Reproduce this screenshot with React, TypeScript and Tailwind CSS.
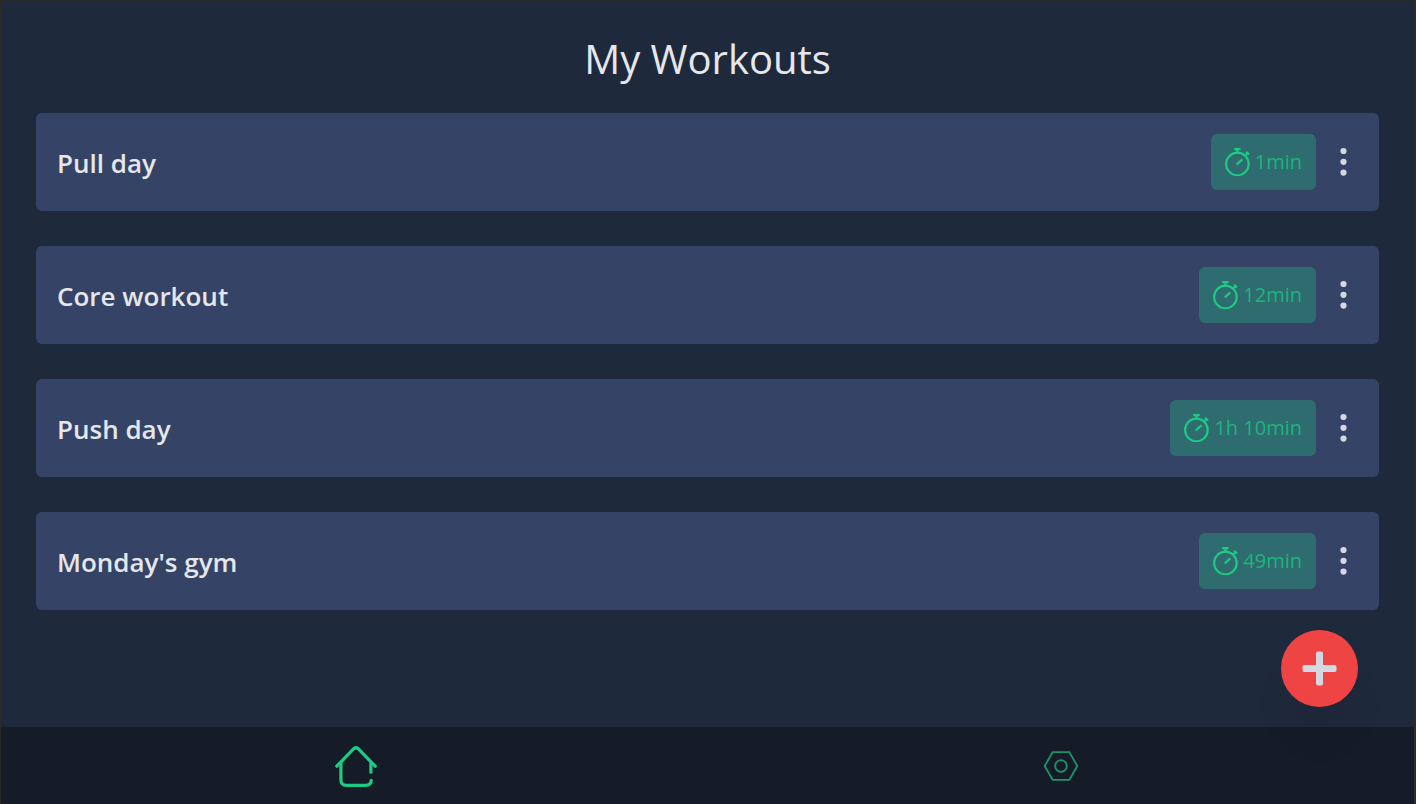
type Workout = { name: string; duration: string };

const workouts: Workout[] = [
  { name: 'Pull day', duration: '1min' },
  { name: 'Core workout', duration: '12min' },
  { name: 'Push day', duration: '1h 10min' },
  { name: "Monday's gym", duration: '49min' },
];

function StopwatchIcon() {
  return (
    <svg aria-hidden="true" className="h-7 w-7 shrink-0 text-[#1dcb84]" viewBox="0 0 28 28" fill="none" stroke="currentColor" strokeWidth="2.1">
      <circle cx="12.4" cy="15.9" r="11.3" />
      <path d="M9.2 1.1h6.4M12.4 1v3.6M20 7.8l3-3M21.2 3.8l2.8 2.8M11.8 16.4l5.6-5" />
    </svg>
  );
}

function DotsIcon() {
  return (
    <svg aria-hidden="true" className="h-8 w-7" viewBox="0 0 28 32" fill="currentColor">
      <circle cx="13.5" cy="5" r="3.1" />
      <circle cx="13.5" cy="15.8" r="3.1" />
      <circle cx="13.5" cy="26.6" r="3.1" />
    </svg>
  );
}

function HomeIcon() {
  return (
    <svg aria-hidden="true" className="h-11 w-11" viewBox="0 0 44 44" fill="none" stroke="currentColor" strokeWidth="3.2" strokeLinecap="round" strokeLinejoin="round">
      <path d="M2.8 22.2L19.8 4.7Q22 2.8 24.2 4.7L41.2 22.2" />
      <path d="M6.9 19V35.8Q6.9 41.3 12.4 41.3H31.8Q37 41.3 37.2 36.4M36.9 19V28.2" />
    </svg>
  );
}

function SettingsIcon() {
  return (
    <svg aria-hidden="true" className="h-9 w-9" viewBox="0 0 36 36" fill="none" stroke="currentColor" strokeWidth="1.8" strokeLinejoin="round">
      <path d="M1.7 18L9.6 4.2H26.4L34.3 18L26.4 31.8H9.6Z" />
      <circle cx="18" cy="18" r="5.8" />
    </svg>
  );
}

function WorkoutCard({ name, duration }: Workout) {
  return (
    <li className="flex items-center justify-between rounded-md bg-[#354466] p-[21px]">
      <h2 className="pt-0.5 text-[26px] leading-9 font-semibold">{name}</h2>
      <div className="flex items-center gap-[14px]">
        <span className="flex h-14 items-center gap-0.5 rounded-md bg-[#2f6c70] px-[14px] text-xl text-[#1cb57d]">
          <StopwatchIcon />
          {duration}
        </span>
        <button type="button" aria-label={`Options for ${name}`} className="text-[#d5d8e3]">
          <DotsIcon />
        </button>
      </div>
    </li>
  );
}

export default function App() {
  return (
    <div className="flex min-h-screen flex-col border border-r-2 border-b-0 border-[#2a2a2a] bg-[#1f293c] font-['Open_Sans','Noto_Sans',sans-serif] text-[#e5e7eb]">
      <main className="flex-1 px-[35px] pt-[30px]">
        <h1 className="mb-[26px] text-center text-[40px] leading-[56px]">My Workouts</h1>
        <ul className="flex flex-col gap-[35px]">
          {workouts.map((workout) => (
            <WorkoutCard key={workout.name} {...workout} />
          ))}
        </ul>
      </main>
      <button
        type="button"
        aria-label="Add workout"
        className="fixed right-[58px] bottom-[97px] flex h-[77px] w-[77px] items-center justify-center rounded-full bg-[#ef4444] text-[#d5d8e3] shadow-[0_36px_40px_-4px_rgba(0,0,0,0.05)]"
      >
        <svg aria-hidden="true" className="h-[35px] w-[35px]" viewBox="0 0 36 36" fill="currentColor">
          <rect x="14.4" y="0.5" width="7.2" height="35" rx="2" />
          <rect x="0.5" y="14.4" width="35" height="7.2" rx="2" />
        </svg>
      </button>
      <nav aria-label="Main" className="grid h-[77px] grid-cols-2 bg-[#151c27]">
        <a href="#home" aria-label="Home" className="flex items-center justify-center pl-1 text-[#1dcb84]">
          <HomeIcon />
        </a>
        <a href="#settings" aria-label="Settings" className="flex items-center justify-center text-[#1b9469]">
          <SettingsIcon />
        </a>
      </nav>
    </div>
  );
}
